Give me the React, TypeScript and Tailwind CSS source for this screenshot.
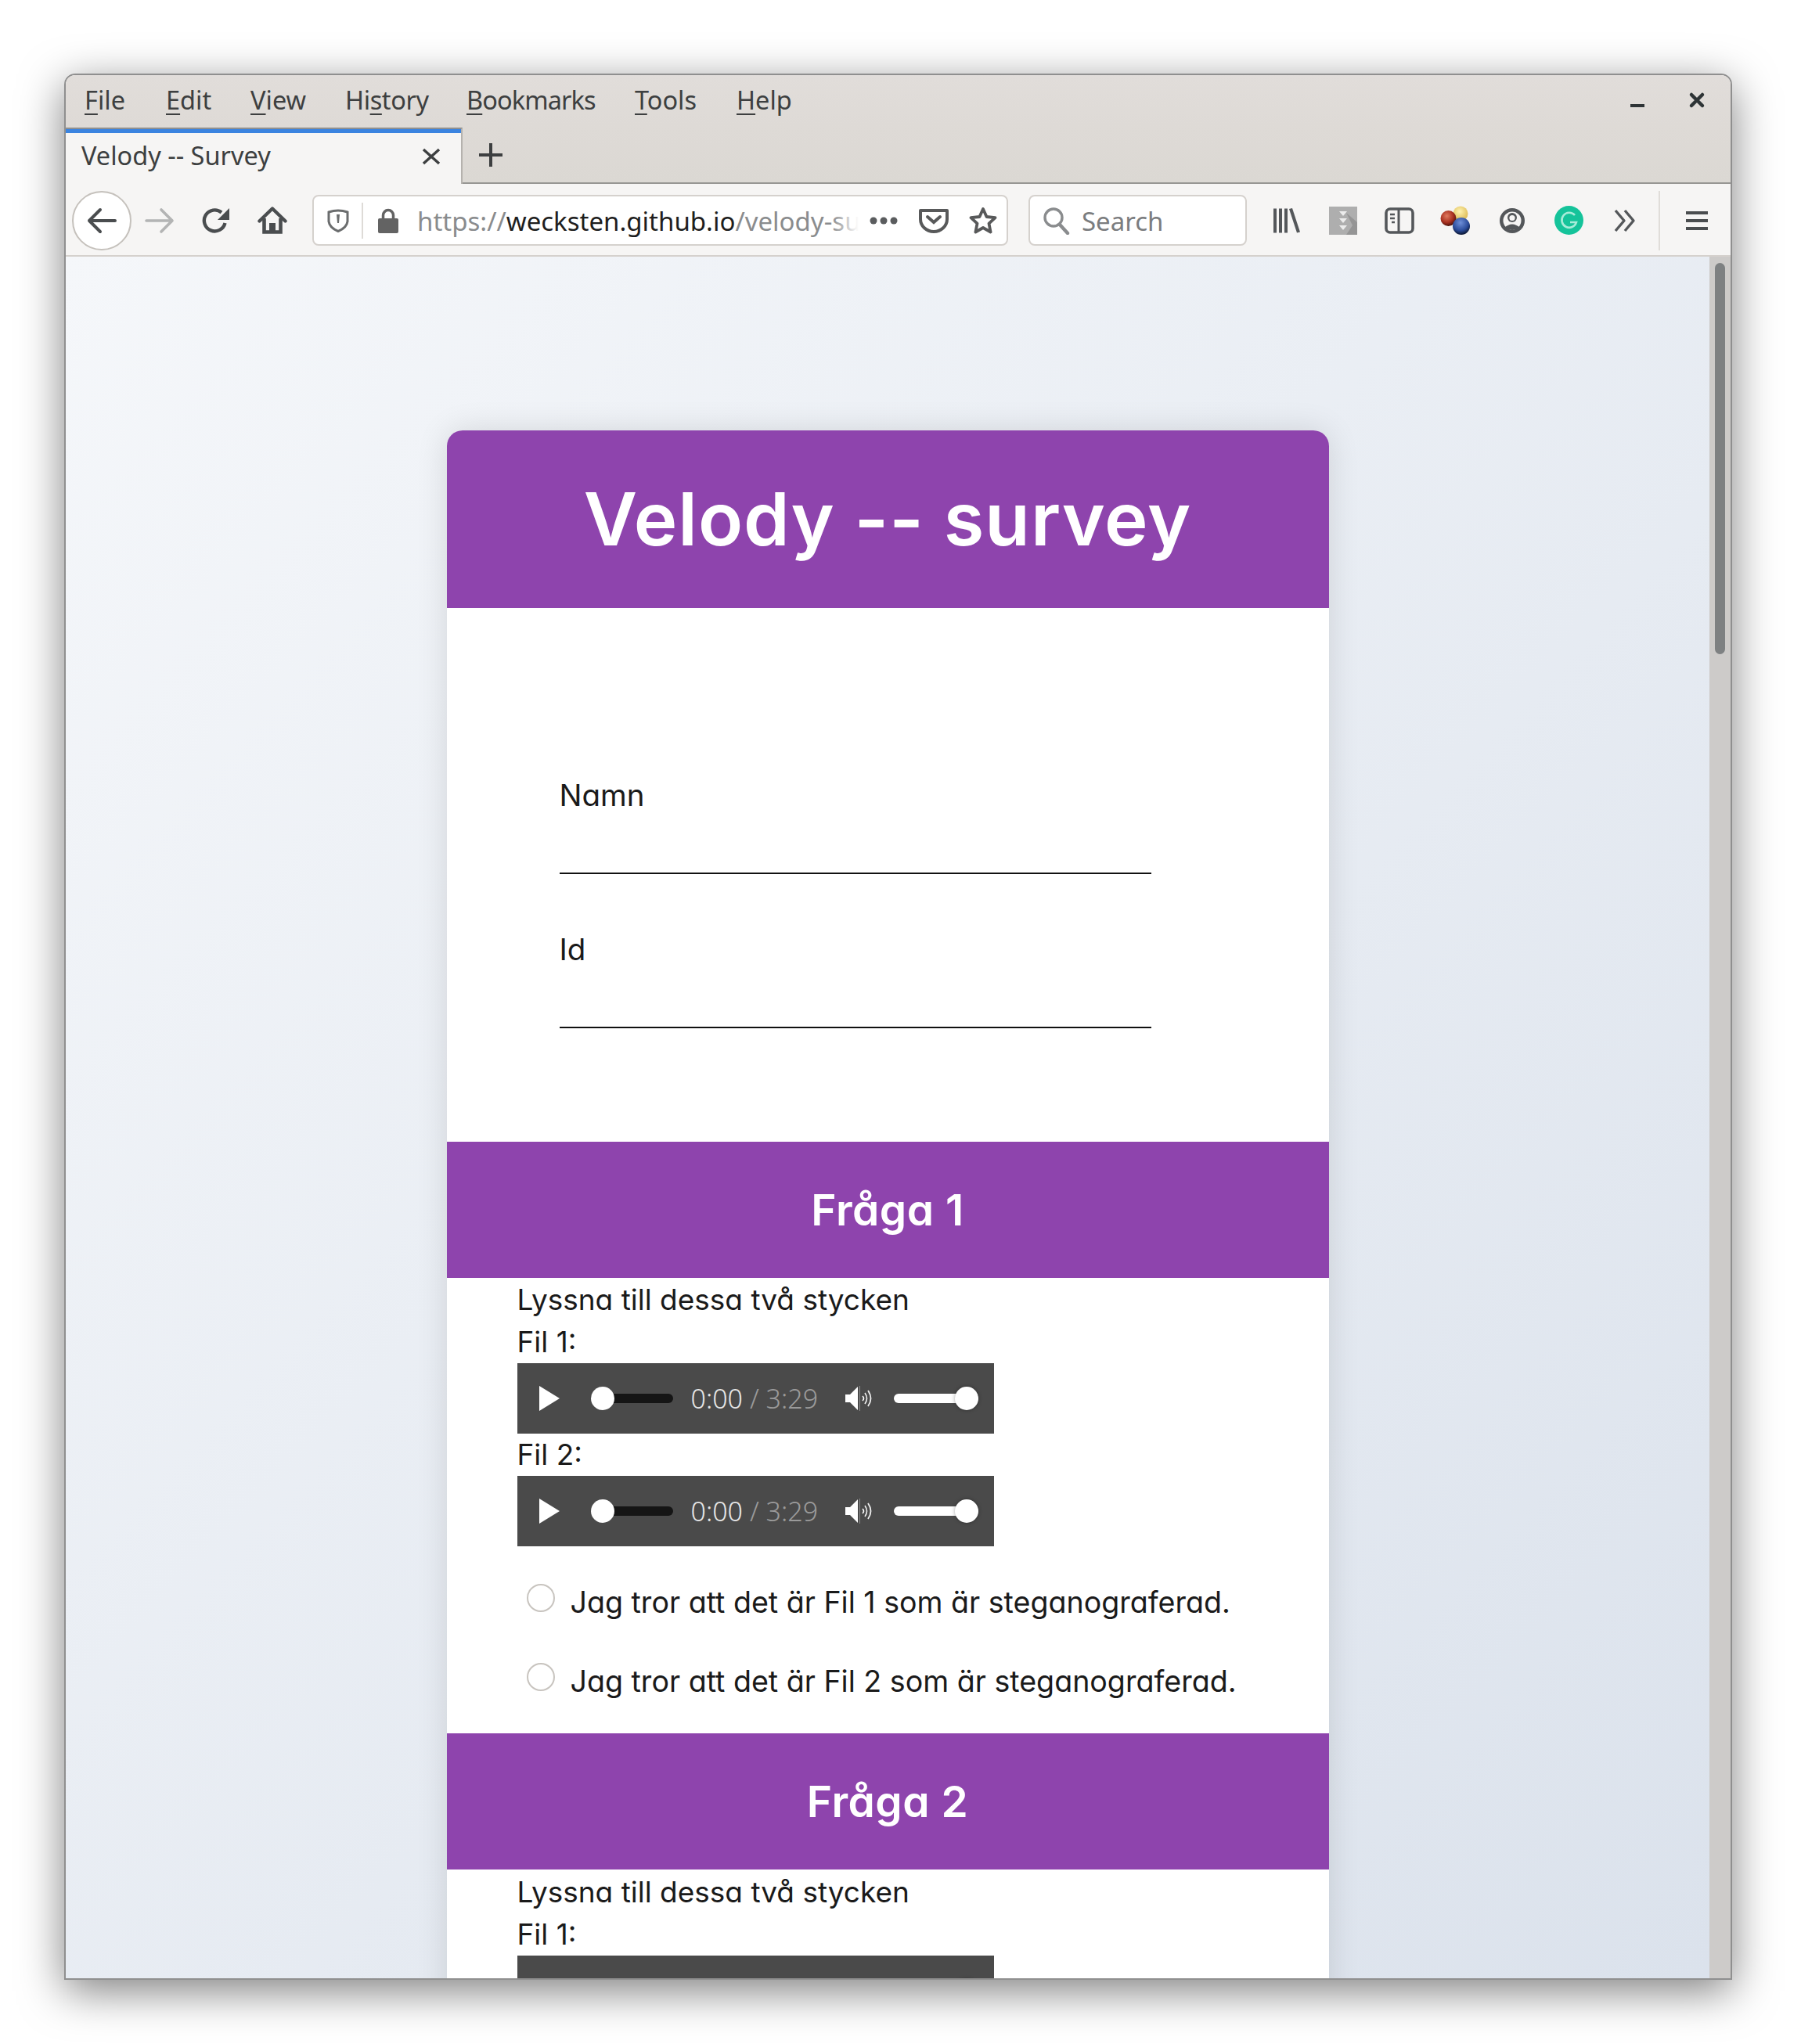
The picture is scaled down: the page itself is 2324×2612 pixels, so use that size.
import type { ReactNode } from 'react';

const uiFont = "font-['Noto_Sans',sans-serif]";
const pageFont = "font-['Inter',sans-serif] [font-feature-settings:'cv11']";

const menuItems = [
    { before: '', key: 'F', after: 'ile', width: 'w-[104px]' },
    { before: '', key: 'E', after: 'dit', width: 'w-[108px]' },
    { before: '', key: 'V', after: 'iew', width: 'w-[121px]' },
    { before: 'Hi', key: 's', after: 'tory', width: 'w-[155px] tracking-[-0.4px]' },
    { before: '', key: 'B', after: 'ookmarks', width: 'w-[215px] tracking-[-0.9px]' },
    { before: '', key: 'T', after: 'ools', width: 'w-[130px]' },
    { before: '', key: 'H', after: 'elp', width: 'w-[80px]' },
];

function Slot({ children, className = 'w-[72px]' }: { children: ReactNode; className?: string }) {
    return <div className={`${className} h-full flex items-center justify-center shrink-0`}>{children}</div>;
}

function Player() {
    return (
        <div className={`w-[609px] h-[90px] shrink-0 bg-[#4a4a4a] flex items-center ${uiFont}`}>
            <svg width="28" height="32" viewBox="0 0 28 32" className="ml-[27px] shrink-0">
                <path d="M1 0 L27 16 L1 32 Z" fill="#fff" />
            </svg>
            <div className="ml-[39px] w-[105px] h-[12px] rounded-full bg-[#151515] relative shrink-0">
                <div className="absolute left-0 top-[-9px] w-[30px] h-[30px] rounded-full bg-white" />
            </div>
            <div className="ml-[23px] w-[165px] text-[34px] leading-none whitespace-nowrap shrink-0 font-light">
                <span className="text-[#e6e6e6]">0:00</span>
                <span className="text-[#9a9a9a]"> / 3:29</span>
            </div>
            <svg width="38" height="32" viewBox="0 0 38 32" className="ml-[32px] shrink-0" fill="none">
                <path d="M0 11 H6 L16 1 V31 L6 21 H0 Z" fill="#fff" />
                <path d="M18.5 0 V32" stroke="#8a8a8a" strokeWidth="1" />
                <path d="M22 13 Q25 16 22 19" stroke="#fff" strokeWidth="1.6" />
                <path d="M25 9 Q30 16 25 23" stroke="#eee" strokeWidth="1.6" />
                <path d="M29 6 Q36 16 29 26" stroke="#eee" strokeWidth="1.8" />
            </svg>
            <div className="ml-[24px] w-[108px] h-[12px] rounded-full bg-white relative shrink-0">
                <div className="absolute right-0 top-[-9px] w-[30px] h-[30px] rounded-full bg-white shadow-[0_0_5px_rgba(0,0,0,0.35)]" />
            </div>
        </div>
    );
}

function SectionHead({ title }: { title: string }) {
    return (
        <div className="h-[174px] bg-[#8e44ad] flex items-center justify-center">
            <h2 className="text-[55px] font-semibold text-white tracking-[0.5px]">{title}</h2>
        </div>
    );
}

function Radio({ label }: { label: string }) {
    return (
        <div className="flex h-[54px] items-start">
            <div className="ml-[12px] mt-[3px] w-[36px] h-[36px] rounded-full border-2 border-[#c8c4bf] bg-white shrink-0" />
            <div className="ml-[20px] text-[37.6px] leading-[54px] whitespace-nowrap text-[#1a1a1a]">{label}</div>
        </div>
    );
}

function Field({ label }: { label: string }) {
    return (
        <div className="flex flex-col">
            <label className="text-[38.5px] leading-[40px] text-[#1a1a1a]">{label}</label>
            <div className="h-[81px] w-[756px] border-b-2 border-[#111]" />
        </div>
    );
}

export default function App() {
    return (
        <div className="w-[2324px] h-[2612px] bg-white pt-[94px] pl-[82px]">
            <div className={`w-[2131px] h-[2436px] flex flex-col overflow-hidden rounded-t-[14px] border-2 border-[#8f8f8f] shadow-[0_14px_55px_rgba(0,0,0,0.5)] ${uiFont}`}>
                {/* menu bar */}
                <div className="h-[67px] shrink-0 bg-gradient-to-b from-[#e1ddda] to-[#dedad6] flex items-center pb-[3px] text-[32.5px] text-[#3d3f40]">
                    <div className="flex items-center pl-[24px]">
                        {menuItems.map((m) => (
                            <span key={m.before + m.key + m.after} className={`${m.width} whitespace-nowrap`}>
                                {m.before}
                                <span className="underline underline-offset-[5px] decoration-2">{m.key}</span>
                                {m.after}
                            </span>
                        ))}
                    </div>
                    <div className="ml-auto flex items-center h-full pr-[5px]">
                        <Slot className="w-[76px]">
                            <div className="w-[18px] h-[4px] bg-[#2e3436] mt-[14px]" />
                        </Slot>
                        <Slot className="w-[76px]">
                            <svg width="22" height="22" viewBox="0 0 22 22" stroke="#2e3436" strokeWidth="4.5" strokeLinecap="round">
                                <path d="M4 4 L18 18 M18 4 L4 18" />
                            </svg>
                        </Slot>
                    </div>
                </div>

                {/* tab strip */}
                <div className="h-[72px] shrink-0 bg-gradient-to-b from-[#dedad6] to-[#dbd8d3] border-b-2 border-[#979693] flex">
                    <div className="w-[507px] h-[72px] bg-[#f6f5f4] border-t-2 border-t-[#8f8f8f] flex flex-col shrink-0 border-r-2 border-r-[#b5b2ae]">
                        <div className="h-[5px] bg-[#3b84e0] shrink-0" />
                        <div className="flex-1 flex items-center pl-[20px] pr-[26px] pb-[6px] text-[32.5px] text-[#3d3f40]">
                            <span>Velody -- Survey</span>
                            <svg width="24" height="22" viewBox="0 0 24 22" className="ml-auto" stroke="#3d3f40" strokeWidth="3.4">
                                <path d="M2 2 L22 20 M22 2 L2 20" />
                            </svg>
                        </div>
                    </div>
                    <Slot className="w-[72px]">
                        <svg width="34" height="34" viewBox="0 0 34 34" stroke="#3d3f40" strokeWidth="4">
                            <path d="M17 2 V32 M2 17 H32" />
                        </svg>
                    </Slot>
                </div>

                {/* nav bar */}
                <div className="h-[93px] shrink-0 pt-[2px] bg-[#f6f5f4] border-b-2 border-[#d5d1cd] flex items-center text-[33px]">
                    <div className="w-[76px] h-[76px] ml-[8px] rounded-full bg-white border-2 border-[#c5c1bc] flex items-center justify-center shrink-0">
                        <svg width="38" height="34" viewBox="0 0 38 34" fill="none" stroke="#4a4d4f" strokeWidth="4" strokeLinecap="round" strokeLinejoin="round">
                            <path d="M36 17 H3 M17 3 L3 17 L17 31" />
                        </svg>
                    </div>
                    <Slot>
                        <svg width="38" height="34" viewBox="0 0 38 34" fill="none" stroke="#b3b4b4" strokeWidth="3.6" strokeLinecap="round" strokeLinejoin="round">
                            <path d="M2 17 H35 M21 3 L35 17 L21 31" />
                        </svg>
                    </Slot>
                    <Slot>
                        <svg width="36" height="34" viewBox="0 0 36 34" fill="none">
                            <path d="M29.5 20 A13.5 13.5 0 1 1 25 6.5" stroke="#4a4d4f" strokeWidth="4.4" />
                            <path d="M35 1 V16 H20 Z" fill="#4a4d4f" />
                        </svg>
                    </Slot>
                    <Slot>
                        <svg width="38" height="36" viewBox="0 0 38 36" fill="none">
                            <path d="M2.5 18.5 L19 2.5 L35.5 18.5" stroke="#4a4d4f" strokeWidth="4.4" strokeLinecap="round" strokeLinejoin="round" />
                            <path d="M8.5 15 V32.5 H29.5 V15" stroke="#4a4d4f" strokeWidth="4.6" />
                            <rect x="15" y="21" width="8" height="12" fill="#4a4d4f" />
                        </svg>
                    </Slot>

                    {/* url bar */}
                    <div className="ml-[15px] w-[889px] h-[65px] bg-white rounded-[8px] border-2 border-[#d5d1cd] flex items-center shrink-0">
                        <Slot className="w-[61px]">
                            <svg width="28" height="30" viewBox="0 0 28 30" fill="none">
                                <path d="M2 4 Q14 0 26 4 V16 Q25 24 14 28.5 Q3 24 2 16 Z" stroke="#6b6d6e" strokeWidth="3" />
                                <path d="M12 7 H16 L15 18 H13 Z" fill="#6b6d6e" />
                            </svg>
                        </Slot>
                        <div className="w-[2px] h-[46px] bg-[#dedbd7] shrink-0" />
                        <Slot className="w-[64px]">
                            <svg width="28" height="32" viewBox="0 0 28 32">
                                <path d="M7.5 15 V9 A6.5 6.5 0 0 1 20.5 9 V15" fill="none" stroke="#636363" strokeWidth="3.5" />
                                <rect x="1" y="13" width="26" height="19" rx="2" fill="#636363" />
                            </svg>
                        </Slot>
                        <div className="relative w-[564px] ml-[5px] pt-[2px] overflow-hidden whitespace-nowrap shrink-0">
                            <span className="text-[#8a8c8e]">https://</span>
                            <span className="text-[#1e1e1e]">wecksten.github.io</span>
                            <span className="text-[#8a8c8e]">/velody-survey/index.html</span>
                            <div className="absolute right-0 top-0 bottom-0 w-[34px] bg-gradient-to-r from-transparent to-white" />
                        </div>
                        <Slot className="w-[64px]">
                            <svg width="36" height="10" viewBox="0 0 36 10" fill="#5a5c5e">
                                <circle cx="5" cy="5" r="4.5" />
                                <circle cx="18" cy="5" r="4.5" />
                                <circle cx="31" cy="5" r="4.5" />
                            </svg>
                        </Slot>
                        <Slot className="w-[64px]">
                            <svg width="38" height="32" viewBox="0 0 38 32" fill="none" stroke="#58595a" strokeWidth="4">
                                <path d="M2 3 H36 V14 A17 16 0 0 1 2 14 Z" strokeLinejoin="round" />
                                <path d="M11 11 L19 18 L27 11" strokeLinecap="round" />
                            </svg>
                        </Slot>
                        <Slot className="w-[62px]">
                            <svg width="36" height="36" viewBox="0 0 36 36" fill="none" stroke="#58595a" strokeWidth="3.8" strokeLinejoin="round">
                                <path d="M18 3 L22.5 13 L33.5 14.2 L25.5 21.6 L27.6 32.5 L18 27 L8.4 32.5 L10.5 21.6 L2.5 14.2 L13.5 13 Z" />
                            </svg>
                        </Slot>
                    </div>

                    {/* search */}
                    <div className="ml-[26px] w-[279px] h-[65px] bg-white rounded-[8px] border-2 border-[#d5d1cd] flex items-center text-[#7b7d7f] shrink-0">
                        <Slot className="w-[66px]">
                            <svg width="36" height="36" viewBox="0 0 36 36" fill="none" stroke="#8a8c8e">
                                <circle cx="15" cy="14" r="11" strokeWidth="3.4" />
                                <path d="M23 23 L33 34" strokeWidth="4.4" strokeLinecap="round" />
                            </svg>
                        </Slot>
                        <span className="pt-[2px]">Search</span>
                    </div>

                    {/* extensions */}
                    <div className="ml-[15px] h-full flex items-center">
                        <Slot>
                            <svg width="36" height="32" viewBox="0 0 36 32" fill="#54575a">
                                <rect x="1" y="0.5" width="4" height="31" />
                                <rect x="8" y="0.5" width="4" height="31" />
                                <rect x="15" y="0.5" width="4" height="31" />
                                <path d="M21 1 L25 0 L35 30.5 L31 31.5 Z" />
                            </svg>
                        </Slot>
                        <Slot>
                            <svg width="36" height="36" viewBox="0 0 36 36">
                                <rect width="36" height="36" fill="#aeaeae" />
                                <path d="M22 8 L36 20 V36 H22 L30 24 Z" fill="#959595" />
                                <path d="M13 6 H23 L18 12 Z M13 15 H23 L18 21 Z M13 24 H23 L18 30 Z" fill="#ececec" />
                            </svg>
                        </Slot>
                        <Slot>
                            <svg width="38" height="34" viewBox="0 0 38 34" fill="none" stroke="#54575a">
                                <rect x="2" y="2" width="34" height="30" rx="5" strokeWidth="3.6" />
                                <path d="M18 2 V32" strokeWidth="3" />
                                <path d="M7 9 H13 M7 14 H13 M9 19 H13" strokeWidth="2.4" />
                            </svg>
                        </Slot>
                        <Slot>
                            <svg width="40" height="38" viewBox="0 0 40 38">
                                <defs>
                                    <radialGradient id="ballRed" cx="0.4" cy="0.35" r="0.7">
                                        <stop offset="0" stopColor="#e07a5f" />
                                        <stop offset="0.6" stopColor="#a8301f" />
                                        <stop offset="1" stopColor="#3a0d08" />
                                    </radialGradient>
                                    <radialGradient id="ballYellow" cx="0.45" cy="0.35" r="0.7">
                                        <stop offset="0" stopColor="#fff3b0" />
                                        <stop offset="1" stopColor="#d9b44a" />
                                    </radialGradient>
                                    <radialGradient id="ballBlue" cx="0.45" cy="0.3" r="0.75">
                                        <stop offset="0" stopColor="#6f8fd8" />
                                        <stop offset="0.6" stopColor="#2b4c9b" />
                                        <stop offset="1" stopColor="#050a1a" />
                                    </radialGradient>
                                </defs>
                                <circle cx="26" cy="10" r="9.5" fill="url(#ballYellow)" />
                                <circle cx="10.5" cy="16" r="10" fill="url(#ballRed)" />
                                <circle cx="27" cy="26" r="11" fill="url(#ballBlue)" />
                            </svg>
                        </Slot>
                        <Slot>
                            <svg width="34" height="34" viewBox="0 0 34 34">
                                <circle cx="17" cy="17" r="16" fill="#54575a" />
                                <circle cx="17" cy="17" r="11.5" fill="#f6f5f4" />
                                <circle cx="17" cy="13" r="6" fill="#54575a" />
                                <circle cx="17" cy="13.5" r="3.6" fill="#f6f5f4" />
                                <path d="M7 26 Q17 17 27 26 Q17 32 7 26 Z" fill="#54575a" />
                            </svg>
                        </Slot>
                        <Slot>
                            <svg width="37" height="37" viewBox="0 0 37 37">
                                <circle cx="18.5" cy="18.5" r="18.5" fill="#15c39a" />
                                <path d="M26 12 A9.5 9.5 0 1 0 28 21 H20" fill="none" stroke="#a8ecd9" strokeWidth="2.6" />
                            </svg>
                        </Slot>
                        <Slot>
                            <svg width="32" height="32" viewBox="0 0 32 32" fill="none" stroke="#54575a" strokeWidth="3.4" strokeLinejoin="round">
                                <path d="M4 3 L15 16 L4 29 M16 3 L27 16 L16 29" />
                            </svg>
                        </Slot>
                        <div className="w-[2px] h-[76px] bg-[#e0ddd9] ml-[7px] shrink-0" />
                        <Slot className="w-[94px]">
                            <svg width="28" height="28" viewBox="0 0 28 28" fill="#4a4d4f">
                                <rect y="2" width="28" height="4" />
                                <rect y="12" width="28" height="4" />
                                <rect y="22" width="28" height="4" />
                            </svg>
                        </Slot>
                    </div>
                </div>

                {/* page */}
                <div className="flex-1 min-h-0 flex overflow-hidden">
                    <div className="flex-1 min-w-0 bg-gradient-to-br from-[#f5f7fa] to-[#dbe2ec] pt-[222px] overflow-hidden">
                        <div className={`mx-auto w-[1127px] bg-white rounded-t-[20px] shadow-[0_0_40px_rgba(0,0,0,0.12)] ${pageFont}`}>
                            <div className="h-[227px] bg-[#8e44ad] rounded-t-[20px] flex items-center justify-center">
                                <h1 className="text-[94px] font-semibold text-white tracking-[1px]">Velody -- survey</h1>
                            </div>

                            <div className="pt-[219px] pb-[145px] pl-[144px] flex flex-col gap-[76px]">
                                <Field label="Namn" />
                                <Field label="Id" />
                            </div>

                            <SectionHead title="Fråga 1" />
                            <div className="pl-[90px] pt-[1px] pb-[39px] text-[37px] leading-[54px] text-[#1a1a1a]">
                                <div>Lyssna till dessa två stycken</div>
                                <div>Fil 1:</div>
                                <Player />
                                <div>Fil 2:</div>
                                <Player />
                                <div className="mt-[45px] flex flex-col gap-[47px]">
                                    <Radio label="Jag tror att det är Fil 1 som är steganograferad." />
                                    <Radio label="Jag tror att det är Fil 2 som är steganograferad." />
                                </div>
                            </div>

                            <SectionHead title="Fråga 2" />
                            <div className="pl-[90px] pt-[2px] text-[37px] leading-[54px] text-[#1a1a1a]">
                                <div>Lyssna till dessa två stycken</div>
                                <div>Fil 1:</div>
                                <Player />
                            </div>
                        </div>
                    </div>

                    {/* scrollbar */}
                    <div className="w-[27px] shrink-0 bg-[#cdcbc9] pt-[8px] flex justify-center">
                        <div className="w-[13px] h-[500px] rounded-full bg-[#7e8182]" />
                    </div>
                </div>
            </div>
        </div>
    );
}
